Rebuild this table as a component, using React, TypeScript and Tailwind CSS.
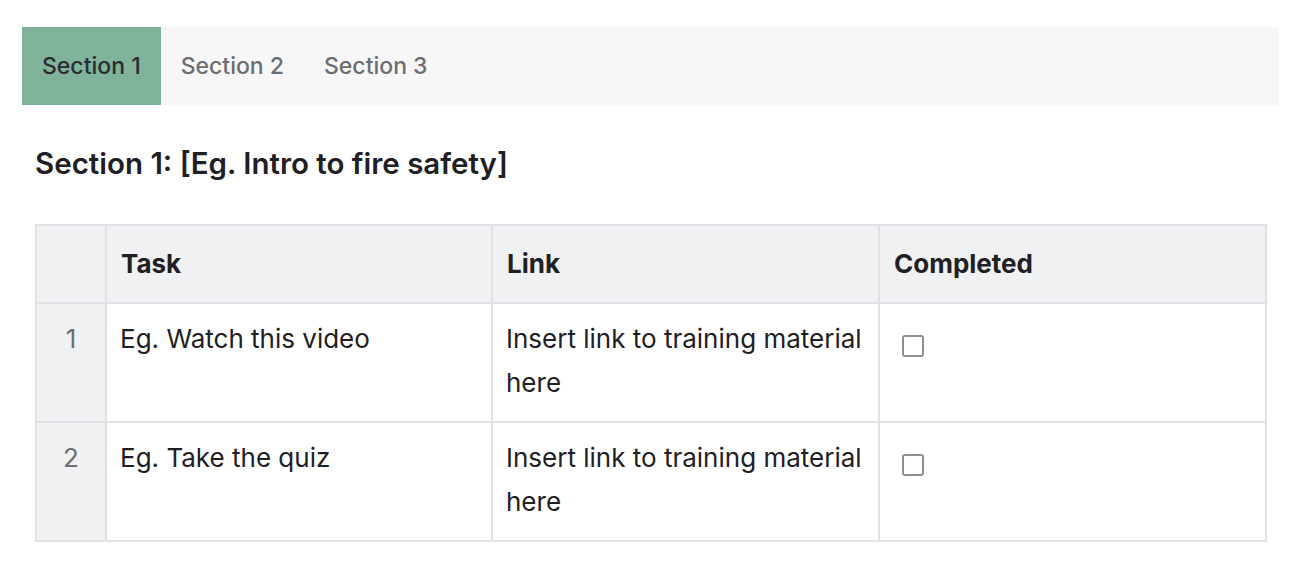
import React from "react";

const rows = [
  { n: 1, task: "Eg. Watch this video" },
  { n: 2, task: "Eg. Take the quiz" },
];

function Box() {
  return <span className="block w-[22px] h-[22px] border-2 border-[#8c8f95] rounded-[3px] bg-white mt-[31px] ml-[9px]" />;
}

export default function App() {
  return (
    <div className="min-h-[576px] bg-white pt-[27px] px-[22px] text-[#1f2024]" style={{ fontFamily: "Inter, 'Noto Sans', sans-serif" }}>
      <div className="flex h-[78px] w-[1257px] bg-[#f7f7f7] text-[23px]">
        <div className="flex items-center px-[20px] bg-[#80b39a] text-[#2a2c2f] font-medium">Section 1</div>
        <div className="flex items-center px-[20px] text-[#6b6d73] font-medium">Section 2</div>
        <div className="flex items-center px-[20px] text-[#6b6d73] font-medium">Section 3</div>
      </div>
      <div className="pl-[13px]">
        <h2 className="mt-[40px] text-[29.5px] font-semibold leading-[36px]">Section 1: [Eg. Intro to fire safety]</h2>
        <table className="mt-[43px] w-[1230px] border-collapse border-2 border-[#e0e1e4] text-[26px] leading-[44px] table-fixed">
          <colgroup>
            <col className="w-[70px]" />
            <col className="w-[386px]" />
            <col className="w-[387px]" />
            <col className="w-[387px]" />
          </colgroup>
          <thead>
            <tr className="h-[78px] bg-[#f0f1f3]">
              <th className="border-2 border-[#e0e1e4]"></th>
              <th className="border-2 border-[#e0e1e4] text-left font-bold px-[14px]">Task</th>
              <th className="border-2 border-[#e0e1e4] text-left font-bold px-[14px]">Link</th>
              <th className="border-2 border-[#e0e1e4] text-left font-bold px-[14px]">Completed</th>
            </tr>
          </thead>
          <tbody>
            {rows.map((r) => (
              <tr key={r.n} className="h-[119px] align-top">
                <td className="border-2 border-[#e0e1e4] bg-[#f0f1f3] text-center text-[#6b6d73] pt-[13px]">{r.n}</td>
                <td className="border-2 border-[#e0e1e4] px-[13px] pt-[13px]">{r.task}</td>
                <td className="border-2 border-[#e0e1e4] pl-[13px] pr-0 pt-[13px] pb-[13px] whitespace-nowrap">
                  <div>Insert link to training material</div>
                  <div>here</div>
                </td>
                <td className="border-2 border-[#e0e1e4] px-[13px]"><Box /></td>
              </tr>
            ))}
          </tbody>
        </table>
      </div>
    </div>
  );
}
